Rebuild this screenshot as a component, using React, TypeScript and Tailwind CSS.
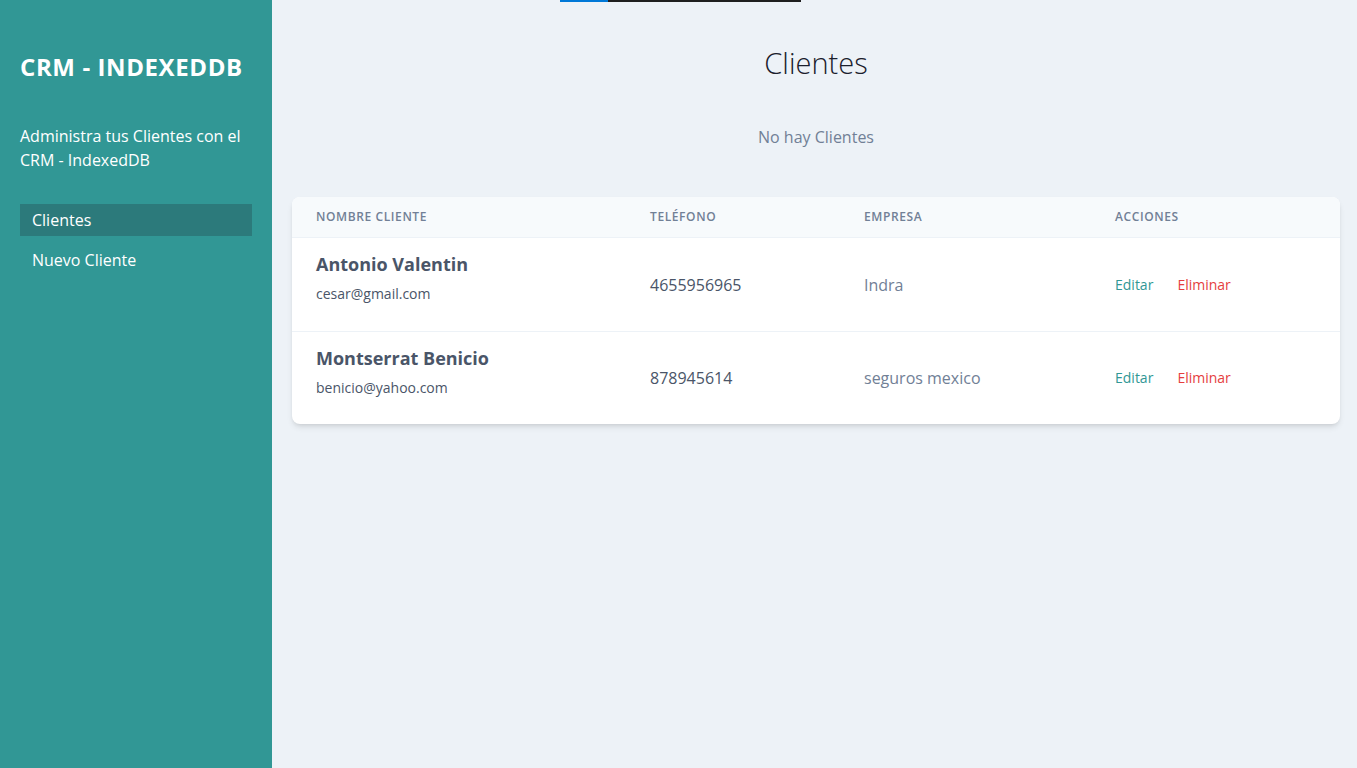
import clsx from "clsx";

const clientes = [
  {
    id: 1,
    nombre: "Antonio Valentin",
    email: "cesar@gmail.com",
    telefono: "4655956965",
    empresa: "Indra",
  },
  {
    id: 2,
    nombre: "Montserrat Benicio",
    email: "benicio@yahoo.com",
    telefono: "878945614",
    empresa: "seguros mexico",
  },
];

const cols = "grid grid-cols-[334px_214px_251px_1fr]";

const App = () => {
  return (
    <div
      className="flex min-h-[768px] bg-[#edf2f7]"
      style={{ fontFamily: '"Open Sans", "Noto Sans", sans-serif' }}
    >
      <aside className="w-[272px] shrink-0 bg-[#319795] px-5 pt-[51px]">
        <h1 className="text-2xl leading-8 font-bold tracking-wide text-white">
          CRM - INDEXEDDB
        </h1>
        <p className="mt-[41px] text-base leading-6 text-white">
          Administra tus Clientes con el CRM - IndexedDB
        </p>
        <nav className="mt-8 flex flex-col gap-2">
          <a className="block h-8 bg-[#2c7a7b] px-3 leading-8 text-white">
            Clientes
          </a>
          <a className="block h-8 px-3 leading-8 text-white">Nuevo Cliente</a>
        </nav>
      </aside>
      <main className="flex-1 pl-5 pr-[17px]">
        <div className="ml-[268px] flex h-[2px] w-[241px]">
          <div className="w-12 bg-[#0078d7]" />
          <div className="flex-1 bg-[#1f1f1f]" />
        </div>
        <h2 className="mt-[43px] text-center text-[29px] leading-9 font-light text-[#1a202c]">
          Clientes
        </h2>
        <p className="mt-11 text-center text-base leading-6 text-[#718096]">
          No hay Clientes
        </p>
        <div className="mt-12 overflow-hidden rounded-lg bg-white shadow-md">
          <div
            className={clsx(
              cols,
              "h-[41px] items-center border-b border-[#edf2f7] bg-[#f7fafc] px-6 text-xs font-semibold tracking-wider text-[#718096] uppercase"
            )}
          >
            <div>Nombre Cliente</div>
            <div>Teléfono</div>
            <div>Empresa</div>
            <div>Acciones</div>
          </div>
          {clientes.map((c, i) => (
            <div
              key={c.id}
              className={clsx(
                cols,
                "h-[93px] items-center px-6",
                i > 0 && "border-t border-[#edf2f7]"
              )}
            >
              <div className="self-start pt-[12px]">
                <p className="text-lg leading-7 font-bold text-[#4a5568]">
                  {c.nombre}
                </p>
                <p className="mt-[6px] text-sm leading-5 text-[#4a5568]">
                  {c.email}
                </p>
              </div>
              <div className="text-base text-[#4a5568]">{c.telefono}</div>
              <div className="text-base text-[#718096]">{c.empresa}</div>
              <div className="flex gap-6 text-sm">
                <a className="text-[#319795]">Editar</a>
                <a className="text-[#e53e3e]">Eliminar</a>
              </div>
            </div>
          ))}
        </div>
      </main>
    </div>
  );
};

export default App;
